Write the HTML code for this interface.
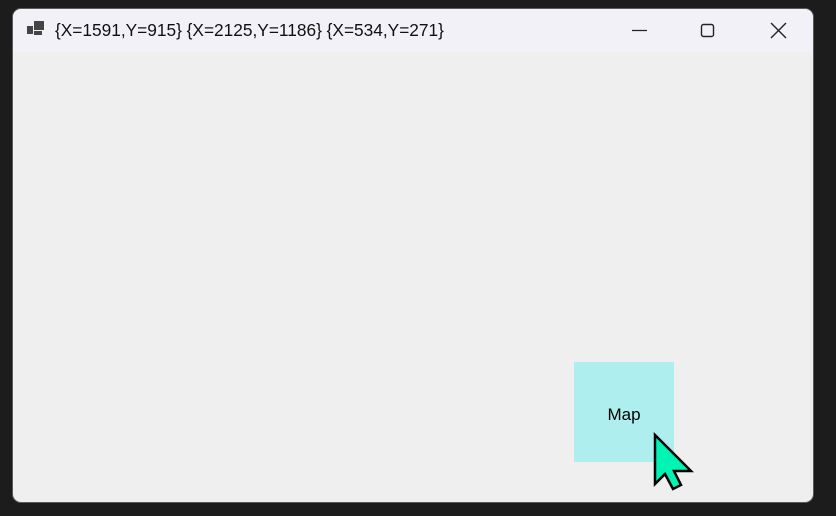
<!DOCTYPE html>
<html><head><style>
html,body{margin:0;padding:0;width:836px;height:516px;background:#1c1c1c;overflow:hidden;font-family:"Liberation Sans","Segoe UI",sans-serif}
.win{position:absolute;left:12px;top:8px;width:802px;height:495px;background:#efefef;border:1px solid #5a5a5a;border-radius:9px;box-sizing:border-box;overflow:hidden}
.title{position:absolute;left:0;top:0;right:0;height:43px;background:#f2f1f7}
.t{position:absolute;left:42px;top:11px;font-size:17.3px;color:#111}
.map{position:absolute;left:561px;top:353px;width:100px;height:100px;background:#afeeee;font-size:17px;color:#000;text-align:center;line-height:106px}
</style></head><body>
<div class="win">
<div class="title">
<svg style="position:absolute;left:14px;top:12px" width="18" height="16"><rect x="0" y="5" width="6" height="8" fill="#444"/><rect x="7" y="0" width="10" height="9" fill="#444"/><rect x="7" y="10" width="8" height="4" fill="#444"/></svg>
<div class="t">{X=1591,Y=915} {X=2125,Y=1186} {X=534,Y=271}</div>
<svg style="position:absolute;left:617px;top:14px" width="20" height="16"><line x1="2" y1="7.5" x2="17" y2="7.5" stroke="#222" stroke-width="1.2"/></svg>
<svg style="position:absolute;left:686px;top:13px" width="18" height="18"><rect x="2.5" y="2.5" width="12" height="12" rx="2" fill="none" stroke="#222" stroke-width="1.4"/></svg>
<svg style="position:absolute;left:756px;top:12px" width="20" height="20"><path d="M2 2L17 17M17 2L2 17" stroke="#222" stroke-width="1.4"/></svg>
</div>
<div class="map">Map</div>
</div>
<svg style="position:absolute;left:0;top:0" width="836" height="516"><path d="M655 435 L655 484 L665 474 L673 489 L681 485 L674 471 L691 471 Z" fill="#00f5b5" stroke="#000" stroke-width="2.5" stroke-linejoin="miter"/></svg>
</body></html>
